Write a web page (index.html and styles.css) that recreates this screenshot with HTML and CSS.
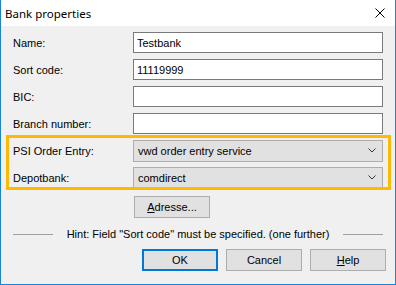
FILE: index.html
```html
<!DOCTYPE html>
<html lang="en">
<head>
    <meta charset="UTF-8">
    <title>Bank properties</title>
    <link rel="stylesheet" href="styles.css">
</head>
<body>
    <div class="dialog">
        <div class="titlebar">
            <span class="title">Bank properties</span>
            <svg class="close" width="10" height="10" viewBox="0 0 10 10">
                <path d="M0.5 0.5 L9.5 9.5 M9.5 0.5 L0.5 9.5" stroke="#000" stroke-width="1"/>
            </svg>
        </div>
        <div class="content">
            <div class="form">
                <label>Name:</label>
                <div class="field">Testbank</div>
                <label>Sort code:</label>
                <div class="field">11119999</div>
                <label>BIC:</label>
                <div class="field"></div>
                <label>Branch number:</label>
                <div class="field"></div>
                <label>PSI Order Entry:</label>
                <div class="combo">
                    <span>vwd order entry service</span>
                    <svg width="8" height="5" viewBox="0 0 8 5"><path d="M0.5 0.5 L4 4 L7.5 0.5" fill="none" stroke="#333" stroke-width="1"/></svg>
                </div>
                <label>Depotbank:</label>
                <div class="combo">
                    <span>comdirect</span>
                    <svg width="8" height="5" viewBox="0 0 8 5"><path d="M0.5 0.5 L4 4 L7.5 0.5" fill="none" stroke="#333" stroke-width="1"/></svg>
                </div>
                <div class="highlight"></div>
            </div>
            <div class="address-row">
                <button class="btn"><u>A</u>dresse...</button>
            </div>
            <div class="hint">
                <span class="line"></span>
                <span class="hint-text">Hint: Field "Sort code" must be specified. (one further)</span>
                <span class="line"></span>
            </div>
            <div class="actions">
                <button class="btn default">OK</button>
                <button class="btn">Cancel</button>
                <button class="btn"><u>H</u>elp</button>
            </div>
        </div>
    </div>
</body>
</html>
```

FILE: styles.css
```css
* { box-sizing: border-box; margin: 0; padding: 0; }
body { background: #f0f0f0; font-family: "Liberation Sans", Arial, sans-serif; font-size: 11px; color: #000; }
.dialog {
    width: 396px; height: 285px; background: #f0f0f0;
    border: 1px solid #1883d7; border-top: none; display: flex; flex-direction: column;
}
.titlebar {
    height: 26px; background: #fff; display: flex; align-items: center; justify-content: space-between;
    padding: 0 10px 0 4px;
}
.title { font-family: "Noto Sans", sans-serif; font-size: 11.5px; }
.content { padding: 6px 12px 0 12px; }
.form {
    display: grid; grid-template-columns: 120px 250px; grid-auto-rows: 21px; row-gap: 6px;
    align-items: center; position: relative;
}
.field {
    height: 21px; background: #fff; border: 1px solid #7a7a7a; padding-left: 3px;
    display: flex; align-items: center;
}
.combo {
    height: 22px; background: #e1e1e1; border: 1px solid #adadad; padding: 0 6px 0 4px;
    display: flex; align-items: center; justify-content: space-between;
}
.highlight {
    position: absolute; left: -7px; top: 103px; width: 385px; height: 55px;
    border: 3px solid #ffb900; pointer-events: none;
}
.address-row { padding-left: 121px; margin-top: 8px; }
.btn {
    font-family: "Liberation Sans", Arial, sans-serif; font-size: 11px; color: #000;
    width: 76px; height: 22px; background: #e1e1e1; border: 1px solid #adadad;
}
.btn.default { border: 2px solid #0078d7; }
.hint { display: flex; align-items: center; gap: 14px; margin-top: 9px; height: 14px; }
.line { flex: 1; height: 1px; background: #a0a0a0; }
.actions { display: flex; justify-content: flex-end; gap: 8px; margin: 8px -3px 0 0; }
```
